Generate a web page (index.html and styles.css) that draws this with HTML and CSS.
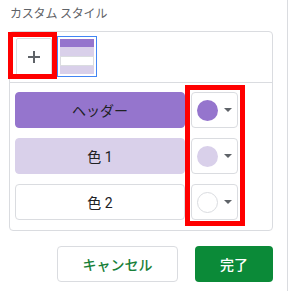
FILE: index.html
```html
<!DOCTYPE html>
<html lang="ja">
<head>
<meta charset="utf-8">
<link rel="stylesheet" href="styles.css">
</head>
<body>
<div class="page">
  <div class="title">カスタム スタイル</div>
  <div class="panel">
    <div class="top">
      <button class="add"><svg width="12" height="12" viewBox="0 0 12 12"><path d="M6 0V12M0 6H12" stroke="#5f6368" stroke-width="2"/></svg></button>
      <div class="swatch">
        <div class="stripe s-head"></div>
        <div class="stripe s-c1"></div>
        <div class="stripe s-c2"></div>
        <div class="stripe s-c1"></div>
      </div>
    </div>
    <div class="rows">
      <div class="row">
        <button class="label l-head">ヘッダー</button>
        <button class="pick"><span class="dot d-head"></span><span class="caret"></span></button>
      </div>
      <div class="row">
        <button class="label l-c1">色 1</button>
        <button class="pick"><span class="dot d-c1"></span><span class="caret"></span></button>
      </div>
      <div class="row">
        <button class="label l-c2">色 2</button>
        <button class="pick"><span class="dot d-c2"></span><span class="caret"></span></button>
      </div>
    </div>
  </div>
  <div class="actions">
    <button class="cancel">キャンセル</button>
    <button class="done">完了</button>
  </div>
  <div class="mark mark-add"></div>
  <div class="mark mark-pick"></div>
</div>
</body>
</html>
```
FILE: styles.css
```css
* { box-sizing: border-box; }
html, body { margin: 0; padding: 0; background: #fff; }
body { font-family: Roboto, "Noto Sans CJK JP", sans-serif; }
.page {
  position: relative;
  width: 288px;
  height: 291px;
  border-right: 1px solid #dadce0;
  padding: 0 14px 0 9px;
}
.title {
  height: 31px;
  padding: 6px 0 0 1px;
  font-size: 12px;
  line-height: 16px;
  color: #5f6368;
  letter-spacing: -0.2px;
}
.panel {
  border: 1px solid #dadce0;
  border-radius: 4px;
  width: 264px;
}
.top {
  display: flex;
  align-items: center;
  gap: 5px;
  padding: 4px 6px 5px;
  border-bottom: 1px solid #dadce0;
}
button { font-family: inherit; cursor: pointer; }
.add {
  width: 36px;
  height: 38px;
  border: 1px solid #dadce0;
  background: #fff;
  border-radius: 2px;
  padding: 0;
  display: flex;
  align-items: center;
  justify-content: center;
}
.add svg { display: block; }
.swatch {
  width: 40px;
  height: 41px;
  border: 1px solid #4285f4;
  padding: 2px;
  display: flex;
  flex-direction: column;
}
.stripe { flex: 1; }
.s-head { background: #9575cd; }
.s-c1 { background: #d9d0ea; }
.s-c2 { background: #fff; border: 1px solid #dadce0; }
.rows {
  display: flex;
  flex-direction: column;
  gap: 10px;
  padding: 9px 0 10px 5px;
}
.row {
  display: flex;
  gap: 6px;
}
.label {
  width: 170px;
  height: 36px;
  border-radius: 4px;
  border: 1px solid #dadce0;
  font-size: 14px;
  color: #202124;
  padding: 0;
}
.l-head { background: #9575cd; border-color: #9575cd; }
.l-c1 { background: #d9d0ea; border-color: #d9d0ea; }
.l-c2 { background: #fff; }
.pick {
  width: 47px;
  height: 36px;
  border: 1px solid #dadce0;
  border-radius: 4px;
  background: #fff;
  display: flex;
  align-items: center;
  padding: 0 0 0 5px;
  gap: 6px;
}
.dot {
  width: 21px;
  height: 21px;
  border-radius: 50%;
}
.d-head { background: #9575cd; }
.d-c1 { background: #d9d0ea; }
.d-c2 { background: #fff; border: 1px solid #dadce0; }
.caret {
  width: 0;
  height: 0;
  border-left: 4px solid transparent;
  border-right: 4px solid transparent;
  border-top: 4px solid #5f6368;
}
.actions {
  display: flex;
  justify-content: flex-end;
  gap: 17px;
  width: 264px;
  padding-top: 15px;
}
.actions button {
  height: 36px;
  border-radius: 4px;
  font-size: 14px;
  font-weight: 500;
}
.cancel {
  width: 121px;
  border: 1px solid #dadce0;
  background: #fff;
  color: #188038;
}
.done {
  width: 78px;
  border: none;
  background: #0b8a38;
  color: #fff;
}
.mark {
  position: absolute;
  border: 5px solid #ff0000;
  pointer-events: none;
}
.mark-add { left: 8px; top: 32px; width: 49px; height: 47px; }
.mark-pick { left: 185px; top: 85px; width: 60px; height: 141px; }
```
